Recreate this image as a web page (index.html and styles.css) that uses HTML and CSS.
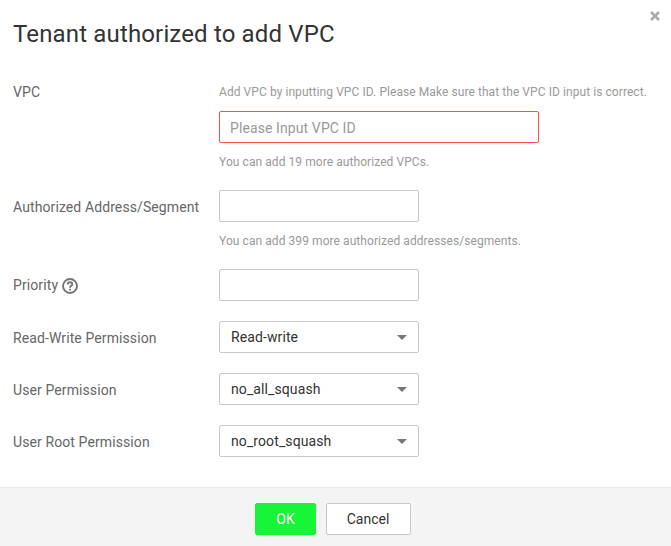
FILE: index.html
```html
<!DOCTYPE html>
<html lang="en">
<head>
<meta charset="utf-8">
<title>Tenant authorized to add VPC</title>
<link rel="stylesheet" href="styles.css">
</head>
<body>
<div class="dialog">
  <header class="header">
    <h1>Tenant authorized to add VPC</h1>
    <button class="close" aria-label="Close"><svg width="10" height="10" viewBox="0 0 10 10"><path d="M1 1l8 8M9 1L1 9"/></svg></button>
  </header>
  <form class="form">
    <div class="row row-vpc">
      <label>VPC</label>
      <div class="field">
        <p class="intro">Add VPC by inputting VPC ID. Please Make sure that the VPC ID input is correct.</p>
        <input class="wide" type="text" placeholder="Please Input VPC ID">
        <p class="hint">You can add 19 more authorized VPCs.</p>
      </div>
    </div>
    <div class="row row-address">
      <label>Authorized Address/Segment</label>
      <div class="field">
        <input type="text">
        <p class="hint">You can add 399 more authorized addresses/segments.</p>
      </div>
    </div>
    <div class="row">
      <label class="with-help">Priority <svg class="help" width="16" height="16" viewBox="0 0 16 16"><circle cx="8" cy="8" r="7"/><path d="M5.700 6.500C5.700 5 6.700 4.200 8 4.200s2.300.8 2.300 2.100C10.300 7.800 8 7.900 8 9.700M8 10.700v1.700"/></svg></label>
      <div class="field"><input type="text"></div>
    </div>
    <div class="row">
      <label>Read-Write Permission</label>
      <div class="select">Read-write</div>
    </div>
    <div class="row">
      <label>User Permission</label>
      <div class="select">no_all_squash</div>
    </div>
    <div class="row">
      <label>User Root Permission</label>
      <div class="select">no_root_squash</div>
    </div>
  </form>
  <footer class="footer">
    <button class="btn primary">OK</button>
    <button class="btn">Cancel</button>
  </footer>
</div>
</body>
</html>
```
FILE: styles.css
```css
* { box-sizing: border-box; }
body { margin: 0; background: #fff; color: #666; font: 14px/20px Roboto, sans-serif; }
p, h1 { margin: 0; }
.dialog { height: 546px; display: flex; flex-direction: column; overflow: hidden; }
.header { height: 82px; flex: none; display: flex; justify-content: space-between; padding: 18px 10px 0 13px; }
h1 { font-size: 24px; line-height: 32px; font-weight: 400; letter-spacing: .15px; color: #333; }
.close { width: 12px; height: 12px; margin-top: -8px; padding: 1px; border: 0; background: none; }
.close svg { display: block; fill: none; stroke: #aaa; stroke-width: 2.6; }
.form { flex: 1; padding: 0 13px; }
.row { display: flex; height: 32px; margin-bottom: 20px; }
.row label { width: 206px; flex: none; line-height: 34px; letter-spacing: .1px; }
.row-vpc { height: 88px; }
.row-vpc label { line-height: 20px; }
.row label.with-help { line-height: 33px; }
.row-address { height: 59px; }
.field { flex: 1; }
.intro, .hint { font-size: 12px; line-height: 20px; letter-spacing: .07px; color: #999; white-space: nowrap; }
.intro { margin-bottom: 9px; }
.hint { margin-top: 9px; }
input, .select { display: block; width: 200px; height: 32px; border: 1px solid #c8c8c8; border-radius: 2px; background: #fff; }
input { font: 14px/20px Roboto, sans-serif; letter-spacing: .1px; padding: 2px 10px 0; outline: 0; }
input.wide { width: 320px; border-color: #ff4c4c; }
input::placeholder { color: #999; opacity: 1; }
.select { display: flex; justify-content: space-between; align-items: center; padding: 0 11px; letter-spacing: .1px; color: #333; }
.select::after { content: ""; border: 5px solid transparent; border-top-color: #777; border-bottom: 0; margin-top: 1px; }
.help { vertical-align: -4px; fill: none; stroke: #757575; stroke-width: 1.9; }
.footer { height: 59px; flex: none; display: flex; justify-content: center; align-items: flex-start; gap: 10px; padding: 15px 5px 0 0; background: #f4f4f4; border-top: 1px solid #e9e9e9; }
.btn { height: 32px; width: 85px; padding: 0 1px 0 0; border: 1px solid #c8c8c8; border-radius: 2px; background: #fff; color: #333; font: 14px/20px Roboto, sans-serif; }
.primary { width: 61px; padding: 0; background: #17f537; border-color: #17f537; color: #fff; }
```
